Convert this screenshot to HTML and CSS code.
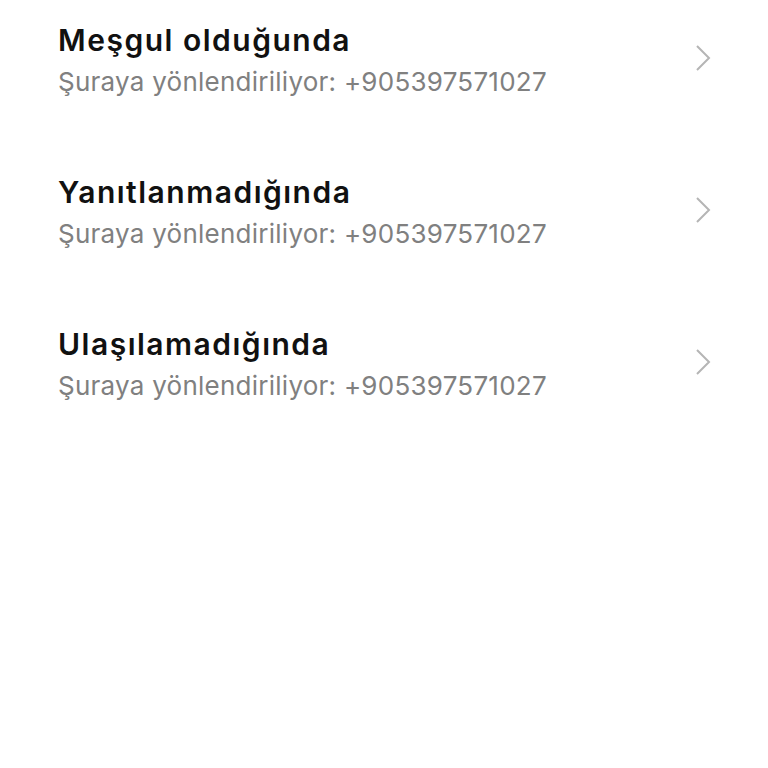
FILE: index.html
```html
<!DOCTYPE html>
<html lang="tr">
<head>
  <meta charset="UTF-8" />
  <title>Çağrı yönlendirme</title>
  <link rel="stylesheet" href="styles.css">
</head>
<body>
  <!-- yönlendirme seçenekleri -->
  <ul class="list">
    <li class="item">
      <div class="item-text">
        <p class="item-title">Meşgul olduğunda</p>
        <p class="item-sub">Şuraya yönlendiriliyor: +905397571027</p>
      </div>
      <svg class="chevron" viewBox="0 0 16 28" width="16" height="28"><path d="M2 2 L14 14 L2 26" /></svg>
    </li>
    <li class="item">
      <div class="item-text">
        <p class="item-title">Yanıtlanmadığında</p>
        <p class="item-sub">Şuraya yönlendiriliyor: +905397571027</p>
      </div>
      <svg class="chevron" viewBox="0 0 16 28" width="16" height="28"><path d="M2 2 L14 14 L2 26" /></svg>
    </li>
    <li class="item">
      <div class="item-text">
        <p class="item-title">Ulaşılamadığında</p>
        <p class="item-sub">Şuraya yönlendiriliyor: +905397571027</p>
      </div>
      <svg class="chevron" viewBox="0 0 16 28" width="16" height="28"><path d="M2 2 L14 14 L2 26" /></svg>
    </li>
  </ul>
</body>
</html>
```

FILE: styles.css
```css
body {
  font-family: Inter, Roboto, sans-serif;
  background-color: #fff;
  margin: 0;
  padding: 0;
}

.list {
  list-style: none;
  margin: 0;
  padding: 0 58px;
}

.item {
  display: flex;
  align-items: flex-start;
  justify-content: space-between;
  padding: 22px 0 53px;
}

.item-text p {
  margin: 0;
}

.item-title {
  font-size: 30px;
  line-height: 36px;
  font-weight: 600;
  letter-spacing: 1.5px;
  color: #111;
}

.item-sub {
  margin-top: 7px !important;
  font-size: 26px;
  line-height: 34px;
  letter-spacing: 0.25px;
  color: #808080;
}

.chevron {
  margin-top: 22px;
  margin-right: -1px;
}

.chevron path {
  fill: none;
  stroke: #b5b5b5;
  stroke-width: 2;
}
```
